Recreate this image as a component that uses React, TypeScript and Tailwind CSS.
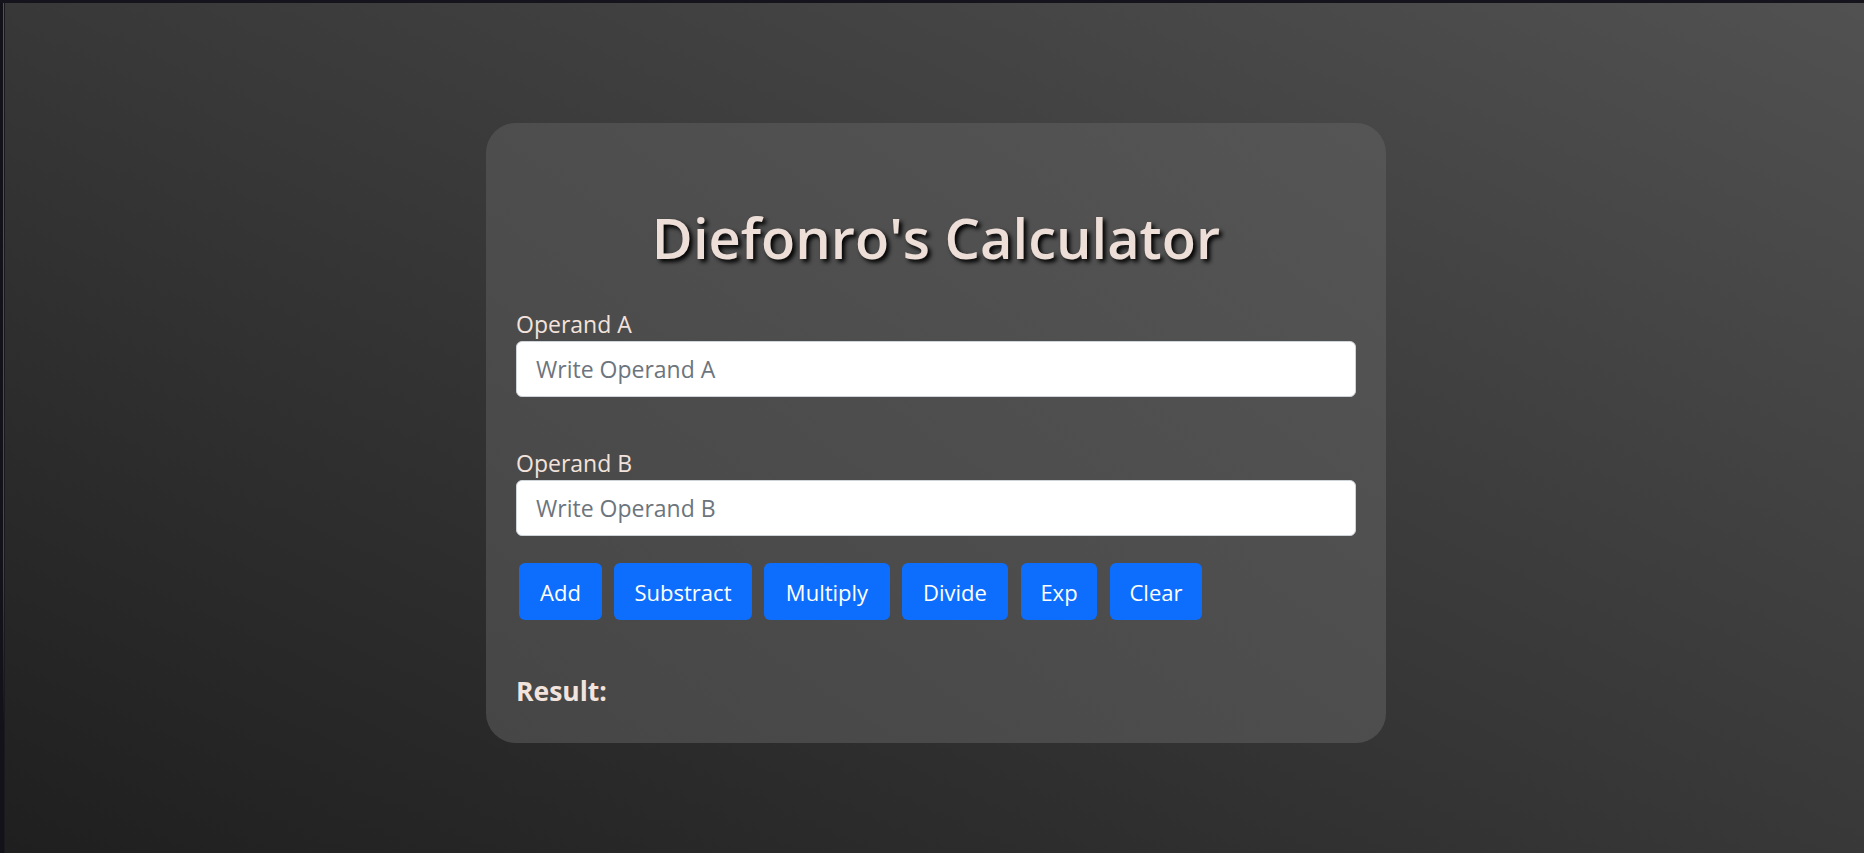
import React from "react";

const font = { fontFamily: '"Open Sans", "Noto Sans", sans-serif' };

const buttons: { label: string; cls: string }[] = [
  { label: "Add", cls: "w-[83px]" },
  { label: "Substract", cls: "w-[138px]" },
  { label: "Multiply", cls: "w-[126px]" },
  { label: "Divide", cls: "w-[106px] mr-[1px]" },
  { label: "Exp", cls: "w-[76px] mr-[1px]" },
  { label: "Clear", cls: "w-[92px]" },
];

export default function App() {
  return (
    <div
      className="w-full h-[853px] overflow-hidden flex flex-col bg-[#15141c]"
      style={font}
    >
      <div className="h-[3px] shrink-0" />
      <div className="flex flex-1 min-h-0">
        <div className="w-[5px] shrink-0 flex">
          <div className="w-[3px] bg-[#121218]" />
          <div className="w-[1px] bg-[linear-gradient(to_bottom,#d0193e_0%,#b01838_65%,#121218_85%)]" />
          <div className="w-[1px] bg-[#1a1a1e]" />
        </div>
        <div className="flex-1 pl-[3px] bg-gradient-to-tr from-[#1f1f1f] via-[#383838] to-[#515151] flex justify-center">
          <div className="w-[900px] h-[620px] mt-[120px] rounded-[30px] bg-gradient-to-tr from-[#464646] to-[#555555] px-[30px] pt-[79px] pb-[35px] flex flex-col">
            <h1 className="text-center text-[56px] leading-[70px] font-semibold text-[#eddfd8] [text-shadow:3px_3px_4px_#000]">
              Diefonro's Calculator
            </h1>
            <label className="mt-[37px] text-[23px] leading-[30px] text-[#f2e3dc]">
              Operand A
            </label>
            <input
              className="mt-[2px] h-[56px] w-full rounded-[6px] border border-[#ced4da] bg-white px-[19px] text-[23px] text-[#212529] placeholder:text-[#6c757d] outline-none"
              placeholder="Write Operand A"
            />
            <label className="mt-[51px] text-[23px] leading-[30px] text-[#f2e3dc]">
              Operand B
            </label>
            <input
              className="mt-[2px] h-[56px] w-full rounded-[6px] border border-[#ced4da] bg-white px-[19px] text-[23px] text-[#212529] placeholder:text-[#6c757d] outline-none"
              placeholder="Write Operand B"
            />
            <div className="mt-[27px] pl-[3px] flex gap-[12px]">
              {buttons.map((b) => (
                <button
                  key={b.label}
                  className={`${b.cls} h-[57px] flex items-center justify-center rounded-[6px] bg-[#0d6efd] text-white text-[22px] leading-[30px]`}
                >
                  {b.label}
                </button>
              ))}
            </div>
            <div className="mt-[54px] text-[26.5px] leading-[34px] font-bold text-[#f2e3dc]">
              Result:
            </div>
          </div>
        </div>
      </div>
    </div>
  );
}
